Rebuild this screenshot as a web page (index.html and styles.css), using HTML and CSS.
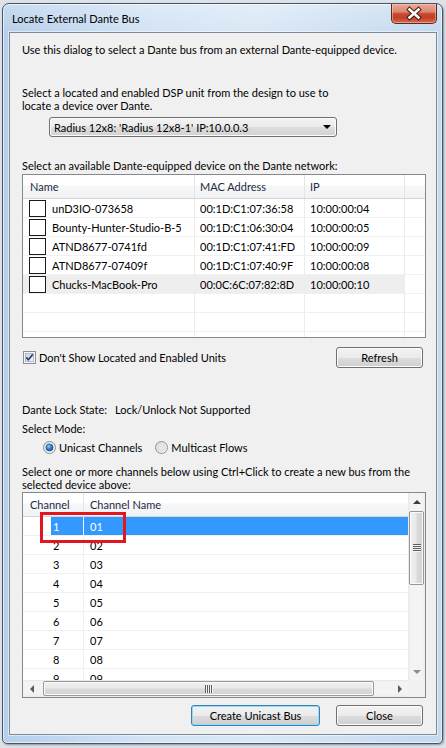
FILE: index.html
```html
<!DOCTYPE html>
<html>
<head>
  <meta charset="UTF-8">
  <title>Locate External Dante Bus</title>
  <link rel="stylesheet" href="styles.css">
</head>
<body>
  <div class="window">
    <div class="titlebar">
      <span class="title">Locate External Dante Bus</span>
      <div class="close-btn">
        <svg width="44" height="19" viewBox="0 0 44 19">
          <path d="M17.5 5.5 L26.5 13.5 M26.5 5.5 L17.5 13.5" stroke="#4a1d17" stroke-width="4.6" stroke-linecap="square" fill="none"/>
          <path d="M17.5 5.5 L26.5 13.5 M26.5 5.5 L17.5 13.5" stroke="#fff" stroke-width="2.6" stroke-linecap="square" fill="none"/>
        </svg>
      </div>
    </div>

    <div class="client">
      <p class="intro">Use this dialog to select a Dante bus from an external Dante-equipped device.</p>

      <p class="prompt-dsp">Select a located and enabled DSP unit from the design to use to<br>locate a device over Dante.</p>
      <div class="combo">
        <span>Radius 12x8: 'Radius 12x8-1' IP:10.0.0.3</span>
        <span class="combo-arrow"></span>
      </div>

      <p class="prompt-device">Select an available Dante-equipped device on the Dante network:</p>
      <div class="listview devices">
        <div class="lv-head dev-cols">
          <div class="cell">Name</div>
          <div class="cell">MAC Address</div>
          <div class="cell">IP</div>
          <div class="cell"></div>
        </div>
        <div class="lv-body">
          <div class="lv-row dev-cols">
            <div class="cell name"><span class="row-check"></span>unD3IO-073658</div>
            <div class="cell">00:1D:C1:07:36:58</div>
            <div class="cell">10:00:00:04</div>
            <div class="cell"></div>
          </div>
          <div class="lv-row dev-cols">
            <div class="cell name"><span class="row-check"></span>Bounty-Hunter-Studio-B-5</div>
            <div class="cell">00:1D:C1:06:30:04</div>
            <div class="cell">10:00:00:05</div>
            <div class="cell"></div>
          </div>
          <div class="lv-row dev-cols">
            <div class="cell name"><span class="row-check"></span>ATND8677-0741fd</div>
            <div class="cell">00:1D:C1:07:41:FD</div>
            <div class="cell">10:00:00:09</div>
            <div class="cell"></div>
          </div>
          <div class="lv-row dev-cols">
            <div class="cell name"><span class="row-check"></span>ATND8677-07409f</div>
            <div class="cell">00:1D:C1:07:40:9F</div>
            <div class="cell">10:00:00:08</div>
            <div class="cell"></div>
          </div>
          <div class="lv-row dev-cols hot">
            <div class="cell name"><span class="row-check"></span>Chucks-MacBook-Pro</div>
            <div class="cell">00:0C:6C:07:82:8D</div>
            <div class="cell">10:00:00:10</div>
            <div class="cell"></div>
          </div>
          <div class="lv-row dev-cols"><div class="cell"></div><div class="cell"></div><div class="cell"></div><div class="cell"></div></div>
          <div class="lv-row dev-cols"><div class="cell"></div><div class="cell"></div><div class="cell"></div><div class="cell"></div></div>
          <div class="lv-row dev-cols"><div class="cell"></div><div class="cell"></div><div class="cell"></div><div class="cell"></div></div>
        </div>
      </div>

      <div class="device-opts">
        <label class="check">
          <svg class="check-box" width="13" height="13" viewBox="0 0 13 13">
            <defs>
              <linearGradient id="cbFill" x1="0" y1="0" x2="1" y2="1">
                <stop offset="0" stop-color="#c9d2e6"/>
                <stop offset="1" stop-color="#f4f6fb"/>
              </linearGradient>
            </defs>
            <rect x="0.5" y="0.5" width="12" height="12" fill="#f4f4f4" stroke="#8e8f8f"/>
            <rect x="2.5" y="2.5" width="8" height="8" fill="url(#cbFill)" stroke="#b5bccb"/>
            <path d="M3.2 6.4 L5.3 8.8 L9.8 3.4" stroke="#2b3f7a" stroke-width="1.7" fill="none"/>
          </svg>
          Don't Show Located and Enabled Units
        </label>
        <button class="btn">Refresh</button>
      </div>

      <div class="lock">
        <span class="lock-label">Dante Lock State:</span>
        <span>Lock/Unlock Not Supported</span>
      </div>

      <p class="mode-label">Select Mode:</p>
      <div class="modes">
        <label class="radio">
          <svg width="13" height="13" viewBox="0 0 13 13">
            <defs>
              <linearGradient id="rdRing" x1="0" y1="0" x2="1" y2="1">
                <stop offset="0" stop-color="#dcdcdc"/>
                <stop offset="1" stop-color="#fbfbfb"/>
              </linearGradient>
              <radialGradient id="rdDot" cx="0.4" cy="0.35" r="0.7">
                <stop offset="0" stop-color="#8fd0f5"/>
                <stop offset="0.55" stop-color="#2a78c4"/>
                <stop offset="1" stop-color="#134a8c"/>
              </radialGradient>
            </defs>
            <circle cx="6.5" cy="6.5" r="6" fill="url(#rdRing)" stroke="#8e8f8f"/>
            <circle cx="6.5" cy="6.5" r="3.6" fill="url(#rdDot)" stroke="#1f4f88" stroke-width="0.6"/>
          </svg>
          Unicast Channels
        </label>
        <label class="radio">
          <svg width="13" height="13" viewBox="0 0 13 13">
            <circle cx="6.5" cy="6.5" r="6" fill="url(#rdRing)" stroke="#8e8f8f"/>
            <circle cx="6.5" cy="6.5" r="3.8" fill="#e6e6e6" stroke="#cfcfcf" stroke-width="0.6"/>
          </svg>
          Multicast Flows
        </label>
      </div>

      <p class="channel-hint">Select one or more channels below using Ctrl+Click to create a new bus from the<br>selected device above:</p>
      <div class="listview channels">
        <div class="ch-view">
          <div class="lv-head ch-cols">
            <div class="cell">Channel</div>
            <div class="cell">Channel Name</div>
          </div>
          <div class="lv-row ch-cols selected"><div class="cell num">1</div><div class="cell">01</div></div>
          <div class="lv-row ch-cols"><div class="cell num">2</div><div class="cell">02</div></div>
          <div class="lv-row ch-cols"><div class="cell num">3</div><div class="cell">03</div></div>
          <div class="lv-row ch-cols"><div class="cell num">4</div><div class="cell">04</div></div>
          <div class="lv-row ch-cols"><div class="cell num">5</div><div class="cell">05</div></div>
          <div class="lv-row ch-cols"><div class="cell num">6</div><div class="cell">06</div></div>
          <div class="lv-row ch-cols"><div class="cell num">7</div><div class="cell">07</div></div>
          <div class="lv-row ch-cols"><div class="cell num">8</div><div class="cell">08</div></div>
          <div class="lv-row ch-cols"><div class="cell num">9</div><div class="cell">09</div></div>
        </div>

        <div class="vscroll">
          <div class="sb-btn"><span class="arrow up"></span></div>
          <div class="sb-track"><div class="thumb v"><span class="grip-v"></span></div></div>
          <div class="sb-btn"><span class="arrow down"></span></div>
        </div>
        <div class="hscroll">
          <div class="sb-btn"><span class="arrow left"></span></div>
          <div class="sb-track"><div class="thumb h"><span class="grip-h"></span></div></div>
          <div class="sb-btn"><span class="arrow right"></span></div>
        </div>
        <div class="sb-corner"></div>

        <!-- highlight drawn over the first channel row -->
        <div class="callout"></div>
      </div>

      <div class="actions">
        <button class="btn btn-default">Create Unicast Bus</button>
        <button class="btn">Close</button>
      </div>
    </div>
  </div>
</body>
</html>
```
FILE: styles.css
```css
* {
  box-sizing: border-box;
}

body {
  margin: 0;
  width: 446px;
  height: 748px;
  overflow: hidden;
  background: #dde2e8;
  font: 11px/13px "Lato", "Liberation Sans", sans-serif;
  color: #000;
}

p {
  margin: 0;
}

/* Window frame */
.window {
  margin: 3px 0 0 2px;
  width: 441px;
  height: 741px;
  padding: 0 5px 0 6px;
  border: 1px solid #45566b;
  border-radius: 7px 7px 5px 5px;
  background:
    linear-gradient(180deg, rgba(255,255,255,0.25) 0, rgba(255,255,255,0) 28px),
    linear-gradient(90deg, #b7cfea 0%, #d2e3f5 32%, #dae8f6 58%, #c4d9ef 100%);
  box-shadow: inset 0 0 0 1px rgba(255,255,255,0.6), 1px 1px 2px rgba(0,0,0,0.35);
}

.titlebar {
  height: 28px;
  display: flex;
  align-items: flex-start;
}

.title {
  padding: 8px 0 0 3px;
  color: #000;
}

.close-btn {
  margin-left: auto;
  width: 46px;
  height: 20px;
  border: 1px solid #5b2720;
  border-top: none;
  border-radius: 0 0 5px 5px;
  background: linear-gradient(180deg, #e9a897 0%, #dc8a72 40%, #c64a2f 52%, #c13f24 72%, #d66d52 100%);
  box-shadow: inset 0 0 0 1px rgba(255,220,210,0.45);
  display: flex;
  justify-content: center;
}

/* Client area */
.client {
  height: 703px;
  border: 1px solid #7d8a98;
  background: #f0f0f0;
  padding: 10px 10px 0 12px;
  box-shadow: 0 0 0 1px rgba(255,255,255,0.5);
}

.prompt-dsp {
  margin-top: 30px;
}

.combo {
  margin: 5px 0 0 27px;
  width: 288px;
  height: 20px;
  border: 1px solid #707070;
  border-radius: 3px;
  background: linear-gradient(180deg, #f3f3f3 0%, #ebebeb 50%, #dddddd 51%, #d2d2d2 100%);
  box-shadow: inset 0 0 0 1px #fbfbfb;
  display: flex;
  align-items: center;
  justify-content: space-between;
  padding: 0 5px 0 4px;
}

.combo-arrow {
  width: 0;
  height: 0;
  border-left: 4px solid transparent;
  border-right: 4px solid transparent;
  border-top: 4px solid #000;
}

.prompt-device {
  margin-top: 22px;
}

/* List views */
.listview {
  width: 404px;
  background: #fff;
  border: 1px solid #828790;
}

.lv-head {
  height: 24px;
  border-bottom: 1px solid #d5d5d5;
  background: linear-gradient(180deg, #ffffff 0%, #ffffff 45%, #f6f7f8 46%, #f1f2f4 100%);
  color: #1e2a3f;
}

.lv-head .cell {
  display: flex;
  align-items: center;
  padding-left: 5px;
  border-right: 1px solid #e3e4e6;
}

.lv-head .cell:first-child {
  padding-left: 7px;
}

.lv-head .cell:last-child {
  border-right: none;
}

.lv-row {
  height: 19px;
  border-bottom: 1px solid #f0f0f0;
}

.lv-row .cell {
  display: flex;
  align-items: center;
  padding-left: 5px;
  border-right: 1px solid #ececec;
  white-space: nowrap;
  overflow: hidden;
}

.dev-cols {
  display: grid;
  grid-template-columns: 172px 110px 100px 1fr;
}

.devices {
  margin-top: 2px;
  height: 164px;
  display: flex;
  flex-direction: column;
}

.devices .lv-body {
  flex: 1;
  overflow: hidden;
}

.devices .lv-row .cell:last-child {
  border-right: none;
}

.devices .cell.name {
  padding-left: 6px;
  gap: 6px;
}

.row-check {
  width: 17px;
  height: 17px;
  border: 1px solid #1a1a1a;
  background: #fff;
  flex: none;
}

.devices .hot .cell:not(:last-child) {
  background: #eeeeee;
}

/* Check box and refresh row */
.device-opts {
  margin-top: 9px;
  height: 21px;
  display: flex;
  align-items: center;
  justify-content: space-between;
  padding-left: 1px;
}

.check,
.radio {
  display: flex;
  align-items: center;
  gap: 3px;
}

.btn {
  height: 21px;
  width: 87px;
  margin-right: 3px;
  border: 1px solid #707070;
  border-radius: 3px;
  background: linear-gradient(180deg, #f2f2f2 0%, #ebebeb 50%, #dddddd 51%, #cfcfcf 100%);
  box-shadow: inset 0 0 0 1px #fcfcfc;
  font: inherit;
  color: #000;
  padding: 0;
}

.btn-default {
  width: 129px;
  border-color: #3c7fb1;
  box-shadow: inset 0 0 0 1px #8fdcf9;
}

.lock {
  margin-top: 35px;
  display: flex;
}

.lock-label {
  width: 93px;
}

.mode-label {
  margin-top: 6px;
}

.modes {
  margin-top: 6px;
  height: 13px;
  display: flex;
  gap: 13px;
  padding-left: 21px;
}

.channel-hint {
  margin-top: 11px;
}

/* Channel list with scroll bars */
.channels {
  position: relative;
  margin-top: 1px;
  height: 206px;
  display: grid;
  grid-template-columns: 1fr 17px;
  grid-template-rows: 1fr 17px;
}

.ch-view {
  overflow: hidden;
}

.ch-cols {
  display: grid;
  grid-template-columns: 61px 1fr;
}

.channels .lv-head .cell:first-child {
  padding-left: 7px;
}

.channels .lv-head .cell:last-child {
  padding-left: 6px;
}

.channels .lv-row .cell:last-child {
  border-right: none;
  padding-left: 6px;
}

.channels .cell.num {
  padding-left: 30px;
  border-right-color: #f0f0f0;
}

.channels .selected {
  color: #fff;
}

.channels .selected .cell.num {
  background: linear-gradient(90deg, #fff 0, #fff 28px, #3399ff 28px);
  border-right-color: #fff;
}

.channels .selected .cell:last-child {
  background: #3399ff;
}

.vscroll {
  display: flex;
  flex-direction: column;
  background: linear-gradient(90deg, #e6e6e6 0, #f3f3f3 2px, #f3f3f3 14px, #ebebeb 100%);
}

.hscroll {
  display: flex;
  background: linear-gradient(180deg, #e6e6e6 0, #f3f3f3 2px, #f3f3f3 14px, #ebebeb 100%);
}

.sb-btn {
  flex: none;
  width: 17px;
  height: 17px;
  display: flex;
  align-items: center;
  justify-content: center;
}

.sb-track {
  flex: 1;
  display: flex;
}

.vscroll .sb-track {
  flex-direction: column;
}

.thumb {
  border: 1px solid #989898;
  border-radius: 2px;
  display: flex;
  align-items: center;
  justify-content: center;
  box-shadow: inset 0 0 0 1px #fafafa;
}

.thumb.v {
  margin: 1px 1px 0 1px;
  height: 74px;
  background: linear-gradient(90deg, #f1f1f1 0%, #e9e9e9 45%, #dadada 55%, #d2d2d2 100%);
}

.thumb.h {
  margin: 1px 0 1px 3px;
  width: 331px;
  background: linear-gradient(180deg, #f1f1f1 0%, #e9e9e9 45%, #dadada 55%, #d2d2d2 100%);
}

.grip-v {
  width: 8px;
  height: 8px;
  background: repeating-linear-gradient(180deg, #5d5d5d 0, #5d5d5d 1px, #f4f4f4 1px, #f4f4f4 2px);
}

.grip-h {
  width: 8px;
  height: 8px;
  background: repeating-linear-gradient(90deg, #5d5d5d 0, #5d5d5d 1px, #f4f4f4 1px, #f4f4f4 2px);
}

.arrow {
  width: 0;
  height: 0;
}

.arrow.up {
  border-left: 4px solid transparent;
  border-right: 4px solid transparent;
  border-bottom: 4px solid #3c3c3c;
}

.arrow.down {
  border-left: 4px solid transparent;
  border-right: 4px solid transparent;
  border-top: 4px solid #8c8c8c;
}

.arrow.left {
  border-top: 4px solid transparent;
  border-bottom: 4px solid transparent;
  border-right: 4px solid #5a5a5a;
}

.arrow.right {
  border-top: 4px solid transparent;
  border-bottom: 4px solid transparent;
  border-left: 4px solid #5a5a5a;
}

.sb-corner {
  background: #f0f0f0;
}

.callout {
  position: absolute;
  left: 17px;
  top: 19px;
  width: 86px;
  height: 31px;
  border: 3px solid #e2161f;
}

/* Bottom buttons */
.actions {
  margin-top: 7px;
  height: 21px;
  display: flex;
  justify-content: flex-end;
  gap: 16px;
}

.actions .btn {
  margin-right: 0;
}

.actions .btn:last-child {
  margin-right: 3px;
}
```
